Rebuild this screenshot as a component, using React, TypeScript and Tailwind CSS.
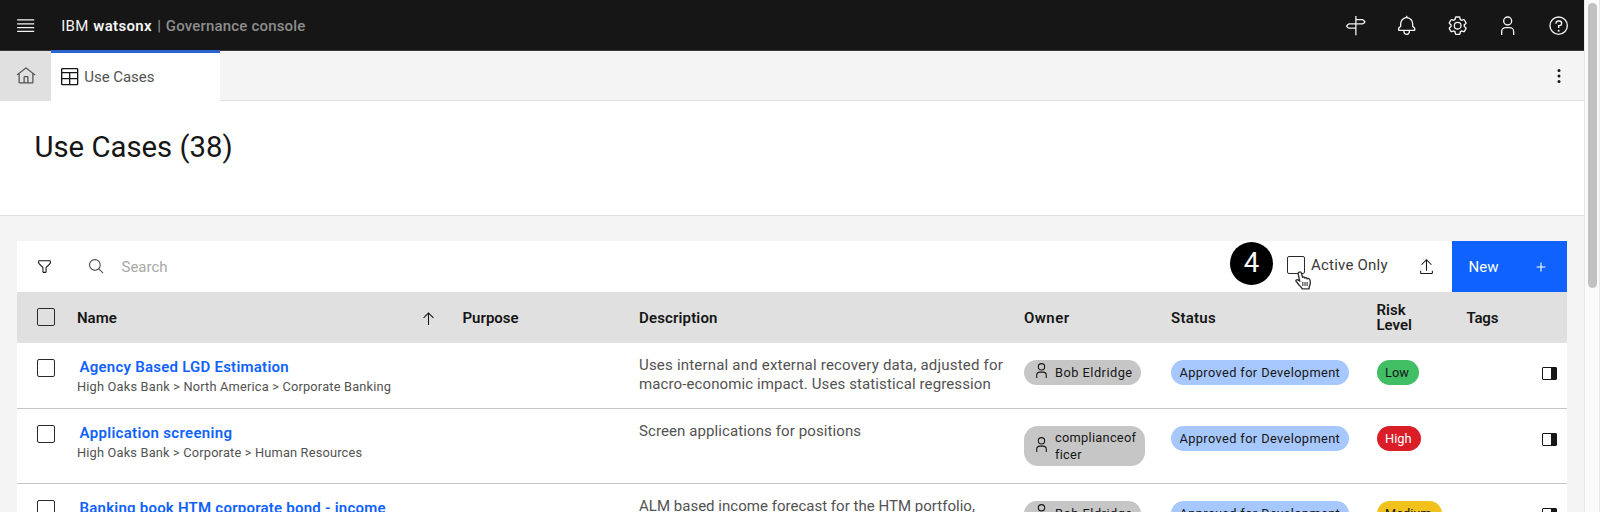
import type { ReactNode } from "react";

type IconProps = { d: string; className?: string; children?: ReactNode };

function Icon({ d, className = "", children }: IconProps) {
  return (
    <svg viewBox="0 0 32 32" fill="currentColor" className={`shrink-0 ${className}`}>
      <path d={d} />
      {children}
    </svg>
  );
}

const BELL =
  "M28.7071,19.293,26,16.5859V13a10.0136,10.0136,0,0,0-9-9.9492V1H15V3.0508A10.0136,10.0136,0,0,0,6,13v3.5859L3.2929,19.293A1,1,0,0,0,3,20v3a1,1,0,0,0,1,1h7v.7768a5.152,5.152,0,0,0,4.5,5.1987A5.0057,5.0057,0,0,0,21,25V24h7a1,1,0,0,0,1-1V20A1,1,0,0,0,28.7071,19.293ZM19,25a3,3,0,0,1-6,0V24h6Zm8-3H5V20.4141L7.707,17.707A1,1,0,0,0,8,17V13a8,8,0,0,1,16,0v4a1,1,0,0,0,.293.707L27,20.4141Z";
const USER =
  "M16,4a5,5,0,1,1-5,5,5,5,0,0,1,5-5m0-2a7,7,0,1,0,7,7A7,7,0,0,0,16,2ZM26,30H24V25a5,5,0,0,0-5-5H13a5,5,0,0,0-5,5v5H6V25a7,7,0,0,1,7-7h6a7,7,0,0,1,7,7Z";
const HELP =
  "M16,2A14,14,0,1,0,30,16,14,14,0,0,0,16,2Zm0,26A12,12,0,1,1,28,16,12,12,0,0,1,16,28ZM17,8H15.5A4.49,4.49,0,0,0,11,12.5V13h2v-.5A2.5,2.5,0,0,1,15.5,10H17a2.5,2.5,0,0,1,0,5H15v4.5h2V17a4.5,4.5,0,0,0,0-9Z";
const GEAR =
  "M27,16.76c0-.25,0-.5,0-.76s0-.51,0-.77l1.92-1.68A2,2,0,0,0,29.3,11L26.94,7a2,2,0,0,0-1.73-1,2,2,0,0,0-.64.1l-2.43.82a11.35,11.35,0,0,0-1.31-.75l-.51-2.52a2,2,0,0,0-2-1.61H13.64a2,2,0,0,0-2,1.61l-.51,2.52a11.48,11.48,0,0,0-1.32.75L7.43,6.06A2,2,0,0,0,6.79,6,2,2,0,0,0,5.06,7L2.7,11a2,2,0,0,0,.41,2.51L5,15.24c0,.25,0,.5,0,.76s0,.51,0,.77L3.11,18.45A2,2,0,0,0,2.7,21L5.06,25a2,2,0,0,0,1.73,1,2,2,0,0,0,.64-.1l2.43-.82a11.35,11.35,0,0,0,1.31.75l.51,2.52a2,2,0,0,0,2,1.61h4.72a2,2,0,0,0,2-1.61l.51-2.52a11.48,11.48,0,0,0,1.32-.75l2.42.82a2,2,0,0,0,.64.1,2,2,0,0,0,1.73-1L29.3,21a2,2,0,0,0-.41-2.51ZM25.21,24l-3.43-1.16a8.86,8.86,0,0,1-2.71,1.57L18.36,28H13.64l-.71-3.55a9.36,9.36,0,0,1-2.7-1.57L6.79,24,4.43,20l2.72-2.4a8.9,8.9,0,0,1,0-3.13L4.43,12,6.79,8l3.43,1.16a8.86,8.86,0,0,1,2.71-1.57L13.64,4h4.72l.71,3.55a9.36,9.36,0,0,1,2.7,1.57L25.21,8,27.57,12l-2.72,2.4a8.9,8.9,0,0,1,0,3.13L27.57,20ZM16,22a6,6,0,1,1,6-6A5.94,5.94,0,0,1,16,22Zm0-10a3.91,3.91,0,0,0-4,4,3.91,3.91,0,0,0,4,4,3.91,3.91,0,0,0,4-4A3.91,3.91,0,0,0,16,12Z";
const HOME =
  "M16.6123,2.2138a1.01,1.01,0,0,0-1.2427,0L1,13.4194l1.2427,1.5717L4,13.6209V26a2.0041,2.0041,0,0,0,2,2H26a2.0037,2.0037,0,0,0,2-2V13.63L29.7573,15,31,13.4282ZM18,26H14V18h4Zm2,0V18a2.0023,2.0023,0,0,0-2-2H14a2.002,2.002,0,0,0-2,2v8H6V12.0615l10-7.79,10,7.8005V26Z";
const FILTER =
  "M18,28H14a2,2,0,0,1-2-2V18.41L4.59,11A2,2,0,0,1,4,9.59V6A2,2,0,0,1,6,4H26a2,2,0,0,1,2,2V9.59A2,2,0,0,1,27.41,11L20,18.41V26A2,2,0,0,1,18,28ZM6,6V9.59l8,8V26h4V17.59l8-8V6Z";
const SEARCH =
  "M29,27.5859l-7.5521-7.5521a11.0177,11.0177,0,1,0-1.4141,1.4141L27.5859,29ZM4,13a9,9,0,1,1,9,9A9.01,9.01,0,0,1,4,13Z";
const EXPORT =
  "M26,24v4H6V24H4v4a2,2,0,0,0,2,2H26a2,2,0,0,0,2-2V24ZM6,12,7.411,13.405,15,5.825V24h2V5.825l7.591,7.58L26,12,16,2Z";
const ARROW_UP = "M16,4,6,14l1.41,1.41L15,7.83V28h2V7.83l7.59,7.58L26,14Z";
const TABLE =
  "M27,3H5A2,2,0,0,0,3,5V27a2,2,0,0,0,2,2H27a2,2,0,0,0,2-2V5A2,2,0,0,0,27,3Zm0,2V9H5V5ZM17,11H27v7H17Zm-2,7H5V11H15ZM5,20H15v7H5Zm12,7V20H27v7Z";
const MENU = "M3.2,6.4H28.8V8.3H3.2ZM3.2,12.2H28.8v1.9H3.2ZM3.2,17.9H28.8v1.9H3.2ZM3.2,23.7H28.8v1.9H3.2Z";

function Signpost() {
  return (
    <svg viewBox="0 0 20 20" fill="none" stroke="currentColor" strokeWidth="1.2" className="size-[21.33px] shrink-0">
      <path d="M10.2 1v18M10.2 4.4h6.2q1.3.5 2.3 2-1 1.5-2.3 2H10.2M10.2 8.4H3.8q-1.3.5-2.3 2 1 1.5 2.3 2h6.4" />
    </svg>
  );
}

function Pointer() {
  return (
    <svg viewBox="0 0 17 19" className="absolute top-[16px] left-[8.5px] z-10 h-[19px] w-[17px]">
      <path
        d="M4.2 1.1C5.4.6 6.3 1.4 6.6 2.6L7.6 6.3C8.2 5.7 9.6 5.9 9.9 7 10.6 6.4 11.9 6.7 12.2 7.8 13.1 7.2 14.6 7.6 15 9.1 15.5 11.2 15.6 13.3 14.4 15.2L14 17.9H7.2C6.6 16.4 4.9 15 3.8 13.7 2.9 12.6 2.1 11.4 1.2 10.5.5 9.6 1.3 8.5 2.5 8.8 3.4 9 4.1 9.8 4.8 10.3L3.2 3.2C3 2.2 3.4 1.4 4.2 1.1Z"
        fill="#fff"
        stroke="#333"
        strokeWidth="1.4"
        strokeLinejoin="round"
      />
      <path d="M7.8 11v4M10 11v4M12.1 11v4" stroke="#333" strokeWidth="1.1" />
    </svg>
  );
}

function Checkbox({ className = "" }: { className?: string }) {
  return <span className={`block size-[18px] shrink-0 rounded-[2px] border border-[#2a2a2a] ${className}`} />;
}

function PanelIcon() {
  return (
    <span className="mt-[24px] flex h-[13px] w-[15px] justify-end overflow-hidden rounded-[1px] border border-[#161616]">
      <span className="w-[5px] bg-[#161616]" />
    </span>
  );
}

function Owner({ lines, className }: { lines: string[]; className: string }) {
  return (
    <div className={`mt-[17px] flex items-center bg-[#c6c6c6] pl-[9px] text-[12.8px] leading-[17px] text-[#161616] ${className}`}>
      <Icon d={USER} className="-mt-1 mr-[5px] size-[17px]" />
      <div>
        {lines.map((l) => (
          <div key={l}>{l}</div>
        ))}
      </div>
    </div>
  );
}

const COLS =
  "grid grid-cols-[60px_385px_177px_385px_147px_205.5px_90px_75px_25.5px] whitespace-nowrap";

type RowProps = {
  title: string;
  titleClass: string;
  crumbs?: string;
  crumbsClass?: string;
  desc: { text: string; className: string }[];
  owner: ReactNode;
  risk: string;
  riskClass: string;
  className: string;
};

function Row(p: RowProps) {
  return (
    <div className={`${COLS} ${p.className} shrink-0 border-b border-[#c6c6c6]`}>
      <div className="pl-5">
        <Checkbox className="mt-4" />
      </div>
      <div>
        <div className={`mt-[14px] pl-[2.5px] text-[15px] leading-5 font-semibold text-[#0f62fe] ${p.titleClass}`}>{p.title}</div>
        <div className={`mt-px text-[12.8px] leading-[18px] text-[#525252] ${p.crumbsClass ?? ""}`}>{p.crumbs}</div>
      </div>
      <div />
      <div className="pt-[12.6px] text-[15px] leading-[19.2px] text-[#525252]">
        {p.desc.map((d) => (
          <div key={d.text} className={d.className}>
            {d.text}
          </div>
        ))}
      </div>
      <div>{p.owner}</div>
      <div>
        <span className="mt-[17px] flex h-[25px] w-[178px] items-center rounded-full bg-[#a6c8ff] pl-[8.5px] text-[12.8px] tracking-[0.38px] text-[#161616]">
          Approved for Development
        </span>
      </div>
      <div>
        <span className={`mt-[17px] flex h-[25px] items-center rounded-full pl-[8.5px] text-[12.8px] ${p.riskClass}`}>{p.risk}</span>
      </div>
      <div />
      <div>
        <PanelIcon />
      </div>
    </div>
  );
}

export default function App() {
  return (
    <div className="flex h-[512px] w-[1600px] overflow-hidden bg-[#f4f4f4] font-['Roboto','Liberation_Sans',sans-serif] text-[#161616]">
      <div className="flex w-[1584px] flex-col">
        <header className="flex h-[51px] shrink-0 items-center border-b border-[#393939] bg-[#161616] pt-px text-[#f4f4f4]">
          <Icon d={MENU} className="ml-[15px] size-[21.33px]" />
          <div className="ml-[25px] flex text-[15px] leading-5 whitespace-pre">
            <span className="w-[32px] tracking-[0.2px]">IBM</span>
            <span className="w-[64px] font-semibold tracking-[0.3px]">watsonx</span>
            <span className="w-[8.5px] font-medium text-[#8d8d8d]">|</span>
            <span className="font-medium tracking-[0.18px] text-[#8d8d8d]">Governance console</span>
          </div>
          <div className="ml-auto flex items-center gap-[29.5px] pr-[14.5px]">
            <Signpost />
            <Icon d={BELL} className="size-[21.33px]" />
            <Icon d={GEAR} className="size-[21.33px]" />
            <Icon d={USER} className="size-[21.33px]" />
            <Icon d={HELP} className="size-[21.33px]">
              <circle cx="16" cy="23.5" r="1.5" />
            </Icon>
          </div>
        </header>

        <nav className="flex h-[50px] shrink-0">
          <div className="flex w-[51px] items-center justify-center bg-[#e0e0e0] text-[#525252]">
            <Icon d={HOME} className="size-[20px]" />
          </div>
          <div className="-mt-px flex w-[169px] items-center border-t-[3px] border-[#2a62cf] bg-white pb-px pl-[8px]">
            <Icon d={TABLE} className="size-[21.33px] text-[#161616]" />
            <span className="ml-[4px] text-[15px] leading-5 tracking-[-0.05px] text-[#525252]">Use Cases</span>
          </div>
          <div className="flex flex-1 items-center justify-end border-b border-[#e0e0e0] pr-[23px]">
            <svg viewBox="0 0 4 16" className="h-4 w-1" fill="#161616">
              <circle cx="2" cy="2.6" r="1.5" />
              <circle cx="2" cy="8" r="1.5" />
              <circle cx="2" cy="13.4" r="1.5" />
            </svg>
          </div>
        </nav>

        <section className="h-[115px] shrink-0 border-b border-[#e0e0e0] bg-white pt-[26px] pl-[34.5px]">
          <h1 className="text-[29.3px] leading-10 font-normal">Use Cases (38)</h1>
        </section>

        <main className="mt-[25px] ml-[17px] flex w-[1550px] shrink-0 flex-col bg-white">
          <div className="flex h-[51px] shrink-0 items-center">
            <Icon d={FILTER} className="ml-[18.5px] size-[17px]" />
            <Icon d={SEARCH} className="ml-[35px] size-[17px] text-[#525252]" />
            <span className="ml-[17px] pt-px text-[15px] leading-5 text-[#a8a8a8]">Search</span>
            <span className="mb-[7px] ml-auto flex size-[43px] items-center justify-center rounded-full bg-black text-[27.5px] text-white">
              4
            </span>
            <div className="relative mb-1 ml-[13.5px] flex items-center">
              <Checkbox />
              <span className="ml-[6.5px] w-[77px] text-[15px] leading-5 tracking-[0.22px] text-[#393939]">Active Only</span>
              <Pointer />
            </div>
            <Icon d={EXPORT} className="mr-[17px] ml-[30px] size-[17px]" />
            <button className="flex h-full w-[115px] items-center bg-[#0f62fe] pt-px pl-[16.5px] text-[15px] text-white">
              New
              <svg viewBox="0 0 10 10" className="ml-[37.5px] size-[10px]" stroke="#fff" strokeWidth="1.1">
                <path d="M5 .6v8.8M.6 5h8.8" />
              </svg>
            </button>
          </div>

          <div className={`${COLS} h-[51px] shrink-0 items-center bg-[#e0e0e0] pt-px text-[15px] leading-[15px] font-semibold`}>
            <div className="pl-5">
              <Checkbox className="-mt-[2px]" />
            </div>
            <div className="flex items-center">
              Name
              <Icon d={ARROW_UP} className="mr-[25px] ml-auto size-[17px]" />
            </div>
            <div className="pl-[0.5px]">Purpose</div>
            <div className="tracking-[0.15px]">Description</div>
            <div className="tracking-[0.45px]">Owner</div>
            <div className="tracking-[0.25px]">Status</div>
            <div>
              Risk
              <br />
              Level
            </div>
            <div className="tracking-[-0.2px]">Tags</div>
            <div />
          </div>

          <Row
            className="h-[66px]"
            title="Agency Based LGD Estimation"
            titleClass="tracking-[0.24px]"
            crumbs="High Oaks Bank > North America > Corporate Banking"
            crumbsClass="tracking-[0.19px]"
            desc={[
              { text: "Uses internal and external recovery data, adjusted for", className: "tracking-[0.2px]" },
              { text: "macro-economic impact. Uses statistical regression", className: "tracking-[0.11px]" },
            ]}
            owner={<Owner lines={["Bob Eldridge"]} className="h-[25px] w-[117px] rounded-full tracking-[0.48px]" />}
            risk="Low"
            riskClass="w-[42px] bg-[#42be65] text-[#161616]"
          />
          <Row
            className="h-[75px]"
            title="Application screening"
            titleClass="tracking-[0.32px]"
            crumbs="High Oaks Bank > Corporate > Human Resources"
            crumbsClass="tracking-[0.18px]"
            desc={[{ text: "Screen applications for positions", className: "tracking-[0.1px]" }]}
            owner={<Owner lines={["complianceof", "ficer"]} className="h-[40px] w-[121px] rounded-[14px] tracking-[0.28px]" />}
            risk="High"
            riskClass="w-[44px] bg-[#da1e28] text-white"
          />
          <Row
            className="h-[75px]"
            title="Banking book HTM corporate bond - income"
            titleClass="tracking-[0.23px]"
            desc={[{ text: "ALM based income forecast for the HTM portfolio,", className: "tracking-[0.02px]" }]}
            owner={<Owner lines={["Bob Eldridge"]} className="h-[25px] w-[117px] rounded-full tracking-[0.48px]" />}
            risk="Medium"
            riskClass="w-[65px] bg-[#f1c21b] text-[#161616]"
          />
        </main>
      </div>
      <aside className="flex w-4 justify-center border-x border-[#e8e8e8] bg-[#fafafa]">
        <div className="mt-[3px] h-[285px] w-[9px] rounded-full bg-[#c1c1c1]" />
      </aside>
    </div>
  );
}
